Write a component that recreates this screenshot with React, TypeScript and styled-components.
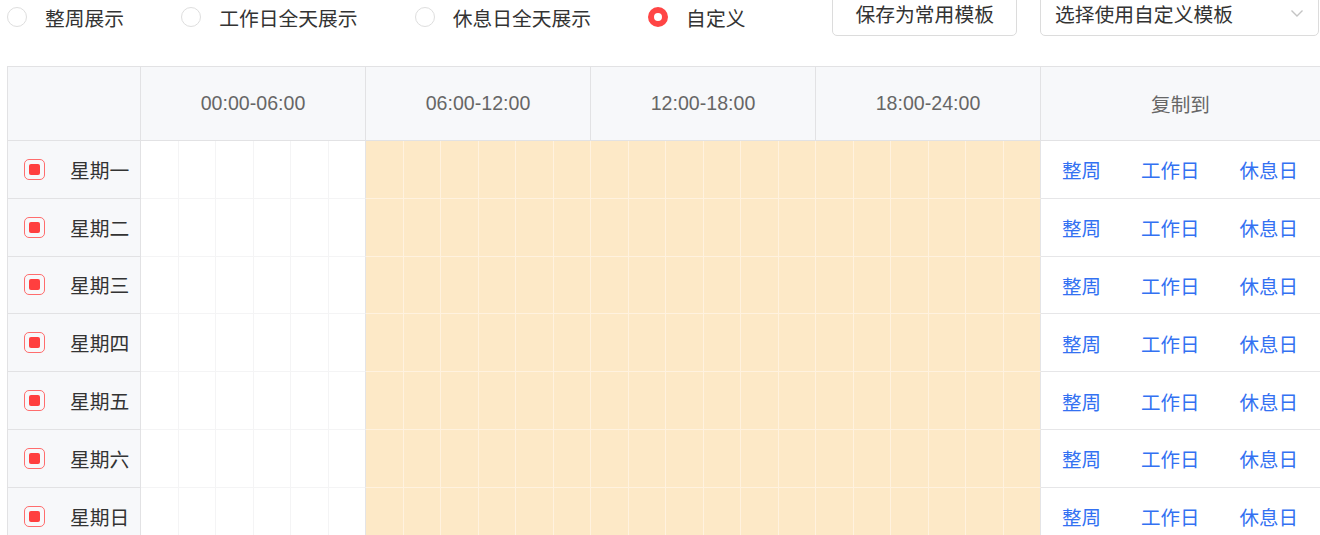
import React from "react";
import styled, { createGlobalStyle } from "styled-components";

const GlobalStyle = createGlobalStyle`
  html, body {
    margin: 0;
    padding: 0;
    background: #ffffff;
    overflow: hidden;
  }
  body {
    font-family: "Liberation Sans", "Noto Sans CJK SC", sans-serif;
    color: #333333;
  }
`;

const Page = styled.div`
  width: 1314px;
  padding-left: 7px;
  margin-top: -9px;
`;

// Barra superior
const Toolbar = styled.div`
  display: flex;
  align-items: center;
  height: 45px;
`;

const RadioGroup = styled.div`
  display: flex;
  align-items: center;
  gap: 57px;
  margin-top: 7px;
`;

const RadioItem = styled.label`
  display: flex;
  align-items: center;
  gap: 18px;
  font-size: 19.8px;
  color: #333333;
  cursor: pointer;
`;

const RadioDot = styled.span<{ $checked: boolean }>`
  width: 20px;
  height: 20px;
  box-sizing: border-box;
  border-radius: 50%;
  border: ${({ $checked }) => ($checked ? "6.5px solid #ff4545" : "1px solid #dedede")};
  background: #ffffff;
`;

const SaveButton = styled.button`
  margin-left: 87px;
  height: 45px;
  padding: 0 22px;
  box-sizing: border-box;
  border: 1px solid #dcdcdc;
  border-radius: 5px;
  background: #ffffff;
  font-family: inherit;
  font-size: 19.8px;
  color: #333333;
`;

const Select = styled.div`
  margin-left: 23px;
  width: 279px;
  height: 45px;
  box-sizing: border-box;
  border: 1px solid #dcdcdc;
  border-radius: 5px;
  display: flex;
  align-items: center;
  justify-content: space-between;
  padding: 0 14px 0 14px;
  font-size: 19.8px;
  color: #333333;
`;

// Tabla semanal
const Table = styled.div`
  margin-top: 30px;
  display: grid;
  grid-template-columns: 133px repeat(24, 37.5px) 1fr;
  border-top: 1px solid #e2e2e4;
  border-left: 1px solid #e2e2e4;
`;

const HeadCell = styled.div<{ $span?: number }>`
  grid-column: span ${({ $span }) => $span ?? 1};
  height: 74px;
  box-sizing: border-box;
  background: #f7f8fa;
  border-right: 1px solid #e2e2e4;
  border-bottom: 1px solid #e2e2e4;
  display: flex;
  align-items: center;
  justify-content: center;
  font-size: 19.6px;
  color: #666666;
`;

const DayCell = styled.div`
  height: 57.8px;
  box-sizing: border-box;
  background: #f7f8fa;
  border-right: 1px solid #e2e2e4;
  border-bottom: 1px solid #e2e2e4;
  display: flex;
  align-items: center;
  padding-left: 16px;
  gap: 25px;
  font-size: 19.8px;
  color: #333333;
`;

const Check = styled.span`
  width: 21px;
  height: 21px;
  box-sizing: border-box;
  border: 1.5px solid #ff6d6d;
  border-radius: 5px;
  display: flex;
  align-items: center;
  justify-content: center;

  &::after {
    content: "";
    width: 11px;
    height: 11px;
    border-radius: 2px;
    background: #ff3f3f;
  }
`;

const HourCell = styled.div<{ $on: boolean; $edge: boolean }>`
  height: 57.8px;
  box-sizing: border-box;
  background: ${({ $on }) => ($on ? "#fde9c7" : "#ffffff")};
  border-right: 1px solid
    ${({ $on, $edge }) => ($edge ? "#e4e4e6" : $on ? "#fff2df" : "#f4f4f5")};
  border-bottom: 1px solid ${({ $on }) => ($on ? "#fff2df" : "#f4f4f5")};
`;

const CopyCell = styled.div`
  height: 57.8px;
  box-sizing: border-box;
  border-right: 1px solid #e2e2e4;
  border-bottom: 1px solid #e6e6e8;
  display: flex;
  align-items: center;
  padding: 1px 0 0 21px;
  gap: 40px;
`;

const CopyLink = styled.a`
  font-size: 19.5px;
  color: #3371f2;
  text-decoration: none;
  cursor: pointer;
`;

const days = ["星期一", "星期二", "星期三", "星期四", "星期五", "星期六", "星期日"];
const blocks = ["00:00-06:00", "06:00-12:00", "12:00-18:00", "18:00-24:00"];
const modes = ["整周展示", "工作日全天展示", "休息日全天展示", "自定义"];

const isOn = (hour: number) => hour >= 6;

export default function App() {
  return (
    <>
      <GlobalStyle />
      <Page>
        <Toolbar>
          <RadioGroup>
            {modes.map((m, i) => (
              <RadioItem key={m}>
                <RadioDot $checked={i === 3} />
                {m}
              </RadioItem>
            ))}
          </RadioGroup>
          <SaveButton>保存为常用模板</SaveButton>
          <Select>
            <span>选择使用自定义模板</span>
            <svg width="14" height="9" viewBox="0 0 14 9">
              <path d="M1.5 1.5 L7 7 L12.5 1.5" fill="none" stroke="#c4c4c4" strokeWidth="1.4" />
            </svg>
          </Select>
        </Toolbar>

        <Table>
          <HeadCell />
          {blocks.map((b) => (
            <HeadCell key={b} $span={6}>
              {b}
            </HeadCell>
          ))}
          <HeadCell>复制到</HeadCell>

          {days.map((d) => (
            <React.Fragment key={d}>
              <DayCell>
                <Check />
                {d}
              </DayCell>
              {Array.from({ length: 24 }).map((_, h) => (
                <HourCell key={h} $on={isOn(h)} $edge={h === 5 || h === 23} />
              ))}
              <CopyCell>
                <CopyLink>整周</CopyLink>
                <CopyLink>工作日</CopyLink>
                <CopyLink>休息日</CopyLink>
              </CopyCell>
            </React.Fragment>
          ))}
        </Table>
      </Page>
    </>
  );
}
